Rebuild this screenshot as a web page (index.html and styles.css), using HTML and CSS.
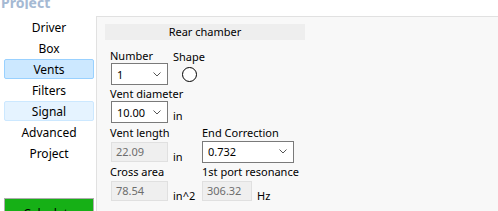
FILE: index.html
```html
<!DOCTYPE html>
<html lang="en">

<head>
  <meta charset="UTF-8" />
  <meta name="viewport" content="width=device-width, initial-scale=1.0" />
  <title>Vents</title>
  <link rel="stylesheet" href="styles.css">
</head>

<body>

  <!-- Menu lateral -->
  <nav class="sidebar">
    <div class="sideTitle">Project</div>
    <ul class="menu">
      <li>Driver</li>
      <li>Box</li>
      <li class="selected">Vents</li>
      <li>Filters</li>
      <li class="hover">Signal</li>
      <li>Advanced</li>
      <li>Project</li>
    </ul>
    <button class="btnCalc">Calculate</button>
  </nav>

  <!-- Panel principal -->
  <div class="main">
    <div class="panel">
      <div class="groupHeader">Rear chamber</div>

      <div class="form">
        <div class="rowTop">
          <div class="colNumber">
            <div class="lbl">Number</div>
            <div class="combo small">
              <span>1</span>
              <svg width="8" height="5" viewBox="0 0 8 5"><path d="M0.5 0.5 L4 4 L7.5 0.5" fill="none" stroke="#555" stroke-width="1" /></svg>
            </div>
          </div>
          <div class="colShape">
            <div class="lbl">Shape</div>
            <div class="circle"></div>
          </div>
        </div>

        <div class="lbl lblGap">Vent diameter</div>
        <div class="ctrlRow">
          <div class="combo small">
            <span>10.00</span>
            <svg width="8" height="5" viewBox="0 0 8 5"><path d="M0.5 0.5 L4 4 L7.5 0.5" fill="none" stroke="#555" stroke-width="1" /></svg>
          </div>
          <span class="unit">in</span>
        </div>

        <div class="grid">
          <div class="lbl">Vent length</div>
          <div class="lbl">End Correction</div>

          <div class="ctrlRow">
            <div class="readonly small">22.09</div>
            <span class="unit unitLow">in</span>
          </div>
          <div class="ctrlRow">
            <div class="combo wide">
              <span>0.732</span>
              <svg width="8" height="5" viewBox="0 0 8 5"><path d="M0.5 0.5 L4 4 L7.5 0.5" fill="none" stroke="#555" stroke-width="1" /></svg>
            </div>
          </div>

          <div class="lbl">Cross area</div>
          <div class="lbl">1st port resonance</div>

          <div class="ctrlRow">
            <div class="readonly small">78.54</div>
            <span class="unit unitLow">in^2</span>
          </div>
          <div class="ctrlRow">
            <div class="readonly mid">306.32</div>
            <span class="unit unitLow">Hz</span>
          </div>
        </div>
      </div>
    </div>
  </div>

</body>

</html>
```

FILE: styles.css
```css
* {
  box-sizing: border-box;
}

body {
  margin: 0;
  width: 498px;
  height: 211px;
  overflow: hidden;
  display: flex;
  background: #fff;
  font-family: "Noto Sans", "Segoe UI", sans-serif;
  font-size: 12px;
  color: #000;
}

/* Sidebar */
.sidebar {
  width: 96px;
  flex-shrink: 0;
  background: #fff;
}

.sideTitle {
  height: 9px;
  overflow: hidden;
  line-height: 6px;
  font-size: 14px;
  font-weight: bold;
  color: #a5b9d3;
  padding-left: 1px;
}

.menu {
  list-style: none;
  margin: 8px 0 0 0;
  padding: 0;
}

.menu li {
  height: 20px;
  line-height: 19px;
  margin: 0 2px 1px 4px;
  text-align: center;
  border: 1px solid transparent;
  border-radius: 2px;
}

.menu li.selected {
  background: #cce8ff;
  border-color: #99d1ff;
}

.menu li.hover {
  background: #e5f3ff;
  border-color: #cce8ff;
}

.btnCalc {
  display: block;
  margin: 35px 0 0 4px;
  width: 90px;
  height: 26px;
  border: 1px solid #adadad;
  background: #16b016;
  background-clip: padding-box;
  font-family: inherit;
  font-size: 12px;
  color: #000;
  padding: 0;
  padding-top: 4px;
}

/* Main */
.main {
  flex: 1;
  padding-top: 16px;
  display: flex;
  font-size: 11px;
}

.panel {
  flex: 1;
  background: #f8f8f8;
  border-top: 1px solid #e1e1e1;
  border-left: 1px solid #e1e1e1;
  padding: 7px 0 0 8px;
}

.groupHeader {
  width: 200px;
  height: 16px;
  line-height: 16px;
  background: #eeeeee;
  text-align: center;
}

.form {
  padding-left: 5px;
  padding-top: 8px;
}

.lbl {
  height: 15px;
  line-height: 15px;
  white-space: nowrap;
}

.lblGap {
  margin-top: 1px;
}

.rowTop {
  display: flex;
}

.colNumber {
  width: 63px;
}

.colShape .lbl {
  margin-top: 1px;
}

.circle {
  width: 15px;
  height: 15px;
  border: 1px solid #000;
  border-radius: 50%;
  background: #fff;
  margin: 3px 0 0 9px;
}

.combo {
  height: 22px;
  background: #fff;
  border: 1px solid #7a7a7a;
  display: flex;
  align-items: center;
  justify-content: space-between;
  padding: 0 6px 0 5px;
  margin-left: 1px;
}

.combo.small {
  width: 57px;
}

.combo.wide {
  width: 92px;
  margin-left: 0;
}

.ctrlRow {
  display: flex;
  align-items: flex-end;
}

.unit {
  margin-left: 5px;
  line-height: 15px;
}

.unitLow {
  margin-bottom: -2px;
}

.readonly {
  height: 20px;
  line-height: 18px;
  background: #efefef;
  border: 1px solid #e0e0e0;
  color: #6d6d6d;
  padding-left: 4px;
  margin-left: 1px;
}

.readonly.small {
  width: 57px;
}

.readonly.mid {
  width: 50px;
  margin-left: 0;
}

.grid {
  display: grid;
  grid-template-columns: 92px 100px;
  grid-template-rows: 15px 23px 16px 24px;
  margin-top: 2px;
}

.grid .lbl:nth-child(1),
.grid .lbl:nth-child(2),
.grid .lbl:nth-child(5),
.grid .lbl:nth-child(6) {
  align-self: end;
}

.grid .ctrlRow {
  align-self: center;
}
```
